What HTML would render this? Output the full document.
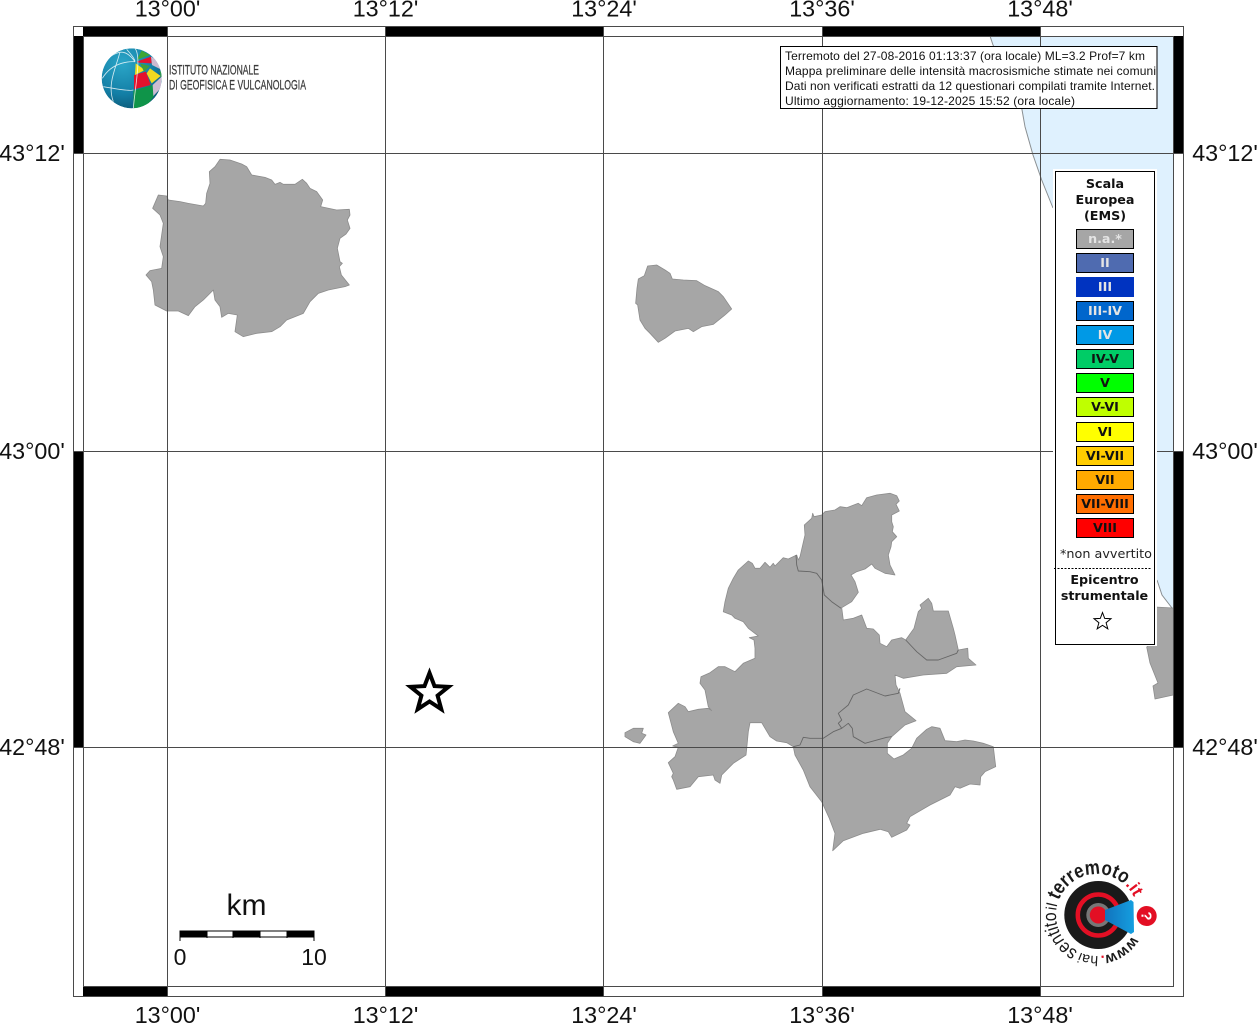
<!DOCTYPE html>
<html><head><meta charset="utf-8"><title>Mappa intensità macrosismiche</title>
<style>html,body{margin:0;padding:0;background:#fff}svg{display:block}
.ax{font:23.3px "Liberation Sans",sans-serif;fill:#111}
.lg{font:bold 12.7px "DejaVu Sans",sans-serif;text-anchor:middle}
.hd{font:12px "Liberation Sans",sans-serif;fill:#111}
</style></head><body>
<svg xmlns="http://www.w3.org/2000/svg" width="1257" height="1024" viewBox="0 0 1257 1024">
<defs>
<clipPath id="mapclip"><rect x="83" y="36" width="1091" height="951"/></clipPath>
<clipPath id="globe"><circle cx="185" cy="175" r="90"/></clipPath>
<radialGradient id="gb" cx="35%" cy="25%" r="85%"><stop offset="0" stop-color="#2ba6c8"/><stop offset=".6" stop-color="#137fa6"/><stop offset="1" stop-color="#0b5470"/></radialGradient>
<linearGradient id="cone" x1="0" y1="0" x2="1" y2="0"><stop offset="0" stop-color="#1173bd"/><stop offset="1" stop-color="#159fe0"/></linearGradient>
<path id="r1" d="M1132.1 936.1A41 41 0 0 1 1098.4 956" fill="none"/>
<path id="r2" d="M1098.4 956A41 41 0 0 1 1081 952.8" fill="none"/>
<path id="r3" d="M1077.8 951.2A41 41 0 0 1 1056.1 912.1" fill="none"/>
<path id="r4" d="M1056.2 910.7A41 41 0 0 1 1058.2 901.6" fill="none"/>
<path id="r5" d="M1058.7 900.3A41 41 0 0 1 1123.9 884.1" fill="none"/>
<path id="r6" d="M1125 885A41 41 0 0 1 1136 902" fill="none"/>
</defs>
<rect width="1257" height="1024" fill="#fff"/>

<g clip-path="url(#mapclip)">
<polygon points="990,36 993,45 1000,60 1010,80 1021.7,108 1025,126.7 1033,155 1041.7,180 1053,208 1100,400 1157,580 1162,595 1172,608 1174,608 1174,36" fill="#dff1fe"/>
<polyline points="990,36 993,45 1000,60 1010,80 1021.7,108 1025,126.7 1033,155 1041.7,180 1053,208" fill="none" stroke="#8a8f92" stroke-width="1"/>
<polyline points="1157,580 1162,595 1172,608" fill="none" stroke="#8a8f92" stroke-width="1"/>

<g fill="#a6a6a6" stroke="#8c8c8c" stroke-width=".8" stroke-linejoin="round">
<g transform="translate(140,150) scale(.33333)" stroke-width="2.4">
<polygon points="240,28 270,30 305,42 320,50 335,75 375,82 395,90 405,103 420,97 430,103 465,103 487,88 500,100 510,115 530,125 548,150 542,170 590,180 628,178 630,195 622,210 630,235 618,252 600,265 592,295 600,335 607,340 598,350 604,375 628,405 615,410 565,420 535,430 510,455 490,490 440,510 420,530 395,545 350,550 310,560 285,545 292,495 265,490 245,502 240,470 225,450 220,420 190,450 165,470 145,497 115,483 80,483 45,465 40,420 35,395 18,375 30,362 65,355 70,320 60,290 65,255 70,220 60,195 38,175 55,135 80,138 85,150 120,155 145,160 190,168 197,160 200,130 210,100 208,65 225,50"/>
</g>
<g transform="translate(625,255) scale(.33333)" stroke-width="2.4">
<polygon points="68,33 95,30 120,45 135,55 142,72 175,75 215,77 240,92 280,110 295,125 320,162 300,180 265,208 230,215 205,230 190,220 150,228 120,250 100,262 75,235 60,220 45,195 38,150 32,145 36,100 40,72 58,62"/>
</g>
<polygon points="625,732.7 633.3,728.3 643.3,728.3 641.7,733.3 646,735 640,743.3 633.3,741.7 625,736.7"/>
<polygon points="798.3,560 800,556.7 805,535 804.3,525 811.7,518.3 812.7,513.3 814,516.7 821.7,515 825,511.7 835,510 840,506.7 846.7,507.7 858.3,503.3 861.7,505.7 866.7,497.7 876.7,495 890,493.3 896.7,495.7 899.3,501 896,504.3 899.3,511 891.7,515 891.7,521.7 893.3,526.7 892.3,531.7 896.7,536.7 891.7,541.7 891,546.7 888.3,555 890,565 895,575 885,573.3 875,568.3 871.7,564 865,569 856.7,571.7 851,575 855,581.7 858.3,592.3 851.7,601.7 841.7,607.7 843.3,620 853.3,618.3 861.7,615 866.7,628.3 873.3,629 879.3,635 880,643.3 886.7,646.7 891.7,640 901.7,637.7 905.7,640 914,628.3 918.3,611.7 921.7,608.3 920,605 928.3,598.3 931.7,603.3 933.3,611 948.3,611 953.3,628.3 955,635 958.3,650 967.7,648.3 968.3,658.3 976,665 956.7,666.7 946.7,673.3 923.3,675 903.3,678.3 895,675 896,685 900,693.3 905,711.7 916,720.7 905,725 891.7,736.7 887.3,743.3 887.3,753.3 894,759 903.3,755 911.7,748.3 916.7,738.3 926.7,729.3 931.7,726.7 940,728.3 945,740.7 956.7,741.7 965,740 973.3,741 983.3,743.3 993.3,746.7 995.7,766.7 985,771.7 980.7,776.7 980,785 970,784 960,788.3 955,786.7 950,795 930,805 910,816.7 906.7,823.3 910,825 906.7,830 891.7,837.3 888.3,831.7 880,829.3 863.3,833.3 843.3,840.7 832.7,850.7 835,833.3 829.3,818.3 821.7,801.7 810,786.7 803.3,770 795,755 793.3,746.7 786.7,742.7 776.7,741 770,736.7 761.7,722.7 750,722.7 748.3,731.7 746.7,748.3 746,755 733.3,763.3 721.7,775 720,783.3 715,780 713.3,775 698.3,776.7 690,786.7 676.7,789.3 673.3,780 671.7,776.7 673.3,773.3 668.3,762.7 675,756.7 678.3,747.3 672.7,746 678.3,743.3 673.3,731.7 668.3,712.7 678.3,703.3 685,706.7 688.3,711.7 698.3,709.3 708.3,708.3 711.7,710.7 708.3,706.7 705,690 700,683.3 701,676.7 710,672.7 718.3,666.7 725,666.7 735,671.7 743.3,663.3 755,658.3 755,648.3 754,640 749.3,637.7 758.3,636 748.3,628.3 743.3,621.7 735,618.3 731.7,615 723.3,611.7 725,601.7 728.3,588.3 733.3,578.3 738.3,570 748.3,561 752.3,563.3 755,568.3 760,568.3 765,562.3 770,567.3 773.3,563.3 775,566 783.3,557.7 788.3,559 796.7,555"/>
<polygon points="1155,607 1173.3,608 1173.3,695 1155,699 1153,686 1158,683 1150,663 1146.7,647 1155,640"/>
</g>
<g fill="none" stroke="#666" stroke-width=".9" stroke-linejoin="round">
<polyline points="796,555 796.7,565 798.3,571 810,571.7 816.7,573.3 821.7,580 824.3,595 831.7,601.7 841,608.3"/>
<polyline points="905.7,640 916.7,651.7 926.7,660 938.3,660 956.7,653.3 958.3,650"/>
<polyline points="900,688.3 898.3,693.3 885,696 866.7,689 853.3,695 848.3,705 838.3,713.3 841.7,720 838.3,723.3 841.7,728.3 833.3,731.7 823.3,738.3 810,738.3 803.3,737.3 800,745 793.3,746.7"/>
<polyline points="841.7,728.3 848.3,723.3 852.3,728.3 853.3,736.7 865,743.3 886.7,737.3 891.7,736.7"/>
</g>
</g>

<!-- bands -->
<g fill="#000">
<rect x="83" y="26" width="84" height="10"/><rect x="385.5" y="26" width="218" height="10"/><rect x="822" y="26" width="218" height="10"/>
<rect x="83" y="987" width="84" height="10"/><rect x="385.5" y="987" width="218" height="10"/><rect x="822" y="987" width="218" height="10"/>
<rect x="73" y="36" width="10" height="117"/><rect x="73" y="451" width="10" height="296"/>
<rect x="1174" y="36" width="10" height="117"/><rect x="1174" y="451" width="10" height="296"/>
</g>
<!-- grid -->
<g stroke="#4a4a4a" stroke-width="1" fill="none" shape-rendering="crispEdges">
<rect x="73.5" y="26.5" width="1110" height="970"/>
<rect x="83.5" y="36.5" width="1090" height="950"/>
<path d="M167.5 26V997M385.5 26V997M603.5 26V997M822.5 26V997M1040.5 26V997"/>
<path d="M73 153.5H1184M73 451.5H1184M73 747.5H1184"/>
</g>

<!-- axis labels -->
<g class="ax" text-anchor="middle">
<text x="167.5" y="16.5">13°00'</text><text x="385.5" y="16.5">13°12'</text><text x="604" y="16.5">13°24'</text><text x="822" y="16.5">13°36'</text><text x="1040" y="16.5">13°48'</text>
<text x="167.5" y="1023">13°00'</text><text x="385.5" y="1023">13°12'</text><text x="604" y="1023">13°24'</text><text x="822" y="1023">13°36'</text><text x="1040" y="1023">13°48'</text>
<text x="32" y="161">43°12'</text><text x="32" y="459">43°00'</text><text x="32" y="755">42°48'</text>
<text x="1225" y="161">43°12'</text><text x="1225" y="459">43°00'</text><text x="1225" y="755">42°48'</text>
</g>

<!-- INGV logo -->
<g transform="translate(70,20) scale(.33333)">
<g clip-path="url(#globe)">
<circle cx="185" cy="175" r="90" fill="url(#gb)"/>
<polygon points="190,265 190,212 248,195 252,228 225,265" fill="#0f9449"/>
<polygon points="192,165 228,155 242,195 192,208" fill="#e4122d"/>
<polygon points="197,130 225,150 195,165" fill="#f4e01c"/>
<polygon points="240,145 272,168 245,190 230,160" fill="#f0d820"/>
<polygon points="210,130 240,138 222,155" fill="#3f9e3a"/>
<polygon points="200,125 243,110 245,130 205,128" fill="#e2132f"/>
<polygon points="215,92 240,105 200,120" fill="#3da636"/>
<polygon points="243,110 262,120 276,150 246,135" fill="#cbbad0"/>
<polygon points="248,195 275,170 272,205 250,228" fill="#cdbcd2"/>
<polygon points="268,150 280,165 272,172" fill="#2f9a50"/>
<path d="M195 85C215 110 195 200 190 265M97 175C130 120 190 125 195 125M120 110C150 90 170 90 195 125M100 200C130 205 180 215 190 210M150 95C140 140 110 190 130 245M170 88C180 100 195 115 195 125" fill="none" stroke="#fff" stroke-width="2.5" opacity=".8"/>
</g>
</g>
<g font-family="'Liberation Sans',sans-serif" font-size="14" fill="#3a3a3a" stroke="#3a3a3a" stroke-width=".25">
<text x="169" y="74.5" textLength="90" lengthAdjust="spacingAndGlyphs">ISTITUTO NAZIONALE</text>
<text x="169" y="89.5" textLength="137" lengthAdjust="spacingAndGlyphs">DI GEOFISICA E VULCANOLOGIA</text>
</g>

<!-- Info box -->
<rect x="780.5" y="46.5" width="376.5" height="62" fill="#fff" stroke="#000" stroke-width="1"/>
<g class="hd">
<text x="785" y="60" textLength="360">Terremoto del 27-08-2016 01:13:37 (ora locale) ML=3.2 Prof=7 km</text>
<text x="785" y="75" textLength="371">Mappa preliminare delle intensità macrosismiche stimate nei comuni</text>
<text x="785" y="90" textLength="370">Dati non verificati estratti da 12 questionari compilati tramite Internet.</text>
<text x="785" y="105" textLength="290">Ultimo aggiornamento: 19-12-2025 15:52 (ora locale)</text>
</g>

<!-- Legend -->
<rect x="1053" y="169" width="104" height="477" fill="#fff"/>
<rect x="1055.5" y="171.5" width="99" height="473" fill="#fff" stroke="#000" stroke-width="1"/>
<g class="lg" fill="#111">
<text x="1105" y="188">Scala</text>
<text x="1105" y="204">Europea</text>
<text x="1105" y="220">(EMS)</text>
</g>
<g stroke="#000" stroke-width="1">
<rect x="1076.5" y="229.5" width="57" height="19" fill="#a6a6a6"/>
<rect x="1076.5" y="253.5" width="57" height="19" fill="#4f6bb0"/>
<rect x="1076.5" y="277.5" width="57" height="19" fill="#0033c0" stroke="#0033c0"/>
<rect x="1076.5" y="301.5" width="57" height="19" fill="#0066cc"/>
<rect x="1076.5" y="325.5" width="57" height="19" fill="#0099e6"/>
<rect x="1076.5" y="349.5" width="57" height="19" fill="#00cc66"/>
<rect x="1076.5" y="373.5" width="57" height="19" fill="#00ff00"/>
<rect x="1076.5" y="397.5" width="57" height="19" fill="#bfff00"/>
<rect x="1076.5" y="422.5" width="57" height="19" fill="#ffff00"/>
<rect x="1076.5" y="446.5" width="57" height="19" fill="#ffcc00"/>
<rect x="1076.5" y="470.5" width="57" height="19" fill="#ffaa00"/>
<rect x="1076.5" y="494.5" width="57" height="19" fill="#ff6e00"/>
<rect x="1076.5" y="518.5" width="57" height="19" fill="#ff0000"/>
</g>
<g class="lg" fill="#e4e4e4">
<text x="1105" y="243">n.a.*</text>
<text x="1105" y="267">II</text>
<text x="1105" y="291">III</text>
<text x="1105" y="315">III-IV</text>
<text x="1105" y="339">IV</text>
</g>
<g class="lg" fill="#111">
<text x="1105" y="363">IV-V</text>
<text x="1105" y="387">V</text>
<text x="1105" y="411">V-VI</text>
<text x="1105" y="436">VI</text>
<text x="1105" y="460">VI-VII</text>
<text x="1105" y="484">VII</text>
<text x="1105" y="508">VII-VIII</text>
<text x="1105" y="532">VIII</text>
</g>
<text x="1060" y="558" font-family="'DejaVu Sans',sans-serif" font-size="12.7" fill="#222" textLength="92" lengthAdjust="spacingAndGlyphs">*non avvertito</text>
<line x1="1054" y1="568.5" x2="1152" y2="568.5" stroke="#000" stroke-width="1" stroke-dasharray="2 1.5"/>
<g class="lg" fill="#111">
<text x="1104.5" y="584">Epicentro</text>
<text x="1104.5" y="600">strumentale</text>
</g>
<polygon points="1102.5,612.5 1104.7,618.4 1111,618.7 1106.1,622.7 1107.8,628.8 1102.5,625.3 1097.2,628.8 1098.9,622.7 1094,618.7 1100.3,618.4" fill="#fff" stroke="#000" stroke-width="1"/>

<!-- Epicentre star -->
<polygon points="429.5,673 434.5,686.1 448.5,686.8 437.6,695.6 441.3,709.2 429.5,701.5 417.7,709.2 421.4,695.6 410.5,686.8 424.5,686.1" fill="#fff" stroke="#000" stroke-width="4"/>

<!-- Scale bar -->
<text x="246.5" y="915" text-anchor="middle" font-family="'Liberation Sans',sans-serif" font-size="30" fill="#111">km</text>
<rect x="180" y="931" width="134" height="6" fill="#fff" stroke="#000" stroke-width="1"/>
<g fill="#000"><rect x="180" y="931" width="27" height="6"/><rect x="233" y="931" width="27" height="6"/><rect x="287" y="931" width="27" height="6"/></g>
<path d="M180 931V941M207 931V938M233 931V938M260 931V938M287 931V938M314 931V941" stroke="#000" stroke-width="1" fill="none"/>
<g font-family="'Liberation Sans',sans-serif" font-size="23" fill="#111" text-anchor="middle">
<text x="180" y="965">0</text><text x="314" y="965">10</text>
</g>

<!-- haisentito logo -->
<circle cx="1098.3" cy="915" r="34" fill="#1a1a1a"/>
<circle cx="1098.3" cy="915" r="20.5" fill="none" stroke="#e30f24" stroke-width="4.5"/>
<circle cx="1098.3" cy="915" r="12" fill="#777"/>
<circle cx="1098.3" cy="915" r="8.5" fill="#e30f24"/>
<polygon points="1105,910 1131,900 1133.5,902 1134,932 1131,934 1105,920" fill="url(#cone)"/>
<circle cx="1146.7" cy="916" r="10" fill="#e30f24"/>
<text transform="translate(1146.7,916) rotate(90)" x="0" y="5" text-anchor="middle" font-family="'Liberation Sans',sans-serif" font-weight="bold" font-size="15" fill="#fff">?</text>
<g font-family="'Liberation Sans',sans-serif" fill="#1a1a1a">
<text font-size="15" font-weight="bold"><textPath href="#r1">www<tspan fill="#e30f24">.</tspan></textPath></text>
<text font-size="14"><textPath href="#r2">hai</textPath></text>
<text font-size="19"><textPath href="#r3" textLength="47" lengthAdjust="spacingAndGlyphs">sentito</textPath></text>
<text font-size="15"><textPath href="#r4">il</textPath></text>
<text font-size="20" font-weight="bold" stroke="none"><textPath href="#r5" textLength="79" lengthAdjust="spacingAndGlyphs">terremoto</textPath></text>
<text font-size="17" font-weight="bold" fill="#e30f24"><textPath href="#r6">.it</textPath></text>
</g>
</svg>
</body></html>
